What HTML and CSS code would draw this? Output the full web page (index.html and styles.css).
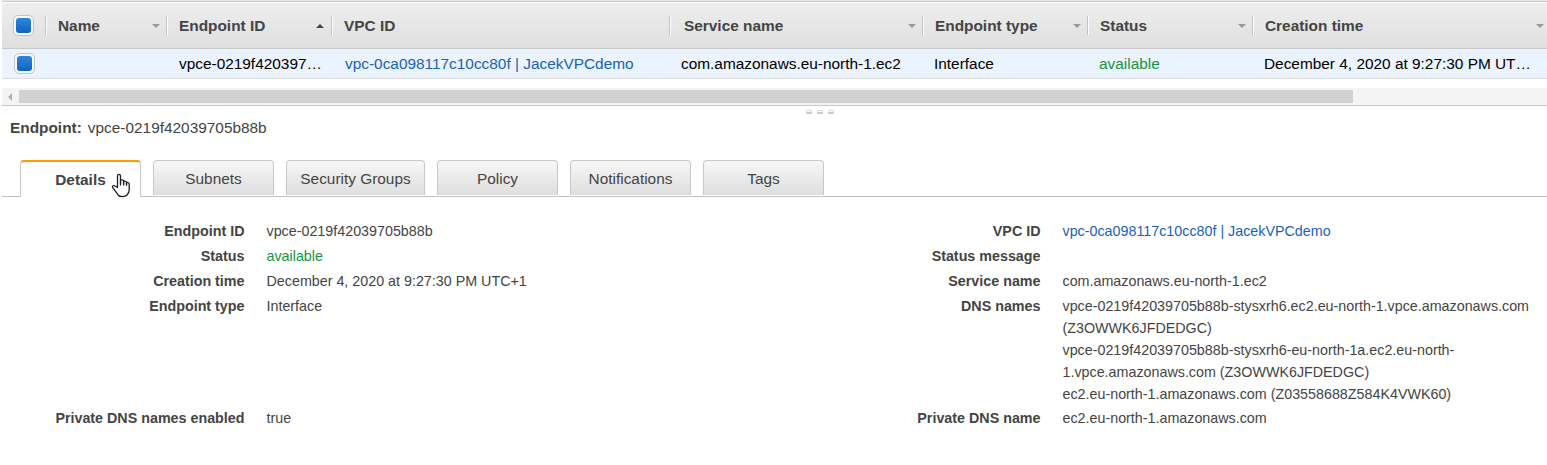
FILE: index.html
```html
<!DOCTYPE html>
<html lang="en">
<head>
<meta charset="utf-8">
<title>Endpoints</title>
<link rel="stylesheet" href="styles.css">
</head>
<body>
<main class="page">
  <section class="grid">
    <div class="row head">
      <div class="check"><span class="box"></span></div>
      <div class="cell">Name<i class="arrow"></i></div>
      <div class="cell">Endpoint ID<i class="arrow up"></i></div>
      <div class="cell">VPC ID</div>
      <div class="cell service">Service name<i class="arrow"></i></div>
      <div class="cell">Endpoint type<i class="arrow"></i></div>
      <div class="cell">Status<i class="arrow"></i></div>
      <div class="cell">Creation time<i class="arrow last"></i></div>
    </div>
    <div class="row data">
      <div class="check"><span class="box"></span></div>
      <div class="cell"></div>
      <div class="cell id">vpce-0219f420397…</div>
      <div class="cell vpc link">vpc-0ca098117c10cc80f | JacekVPCdemo</div>
      <div class="cell">com.amazonaws.eu-north-1.ec2</div>
      <div class="cell">Interface</div>
      <div class="cell state ok">available</div>
      <div class="cell">December 4, 2020 at 9:27:30 PM UT…</div>
    </div>
  </section>
  <div class="scroll"><i class="scroll-arrow"></i><div class="thumb"></div></div>
  <div class="handle"><i></i><i></i><i></i></div>
  <h1 class="title"><b>Endpoint:</b><span>vpce-0219f42039705b88b</span></h1>
  <nav class="tabs">
    <a class="tab active">Details
      <svg class="cursor" width="20" height="25" viewBox="0 0 20 25"><path d="M6.5 14.5V3C6.5 .9 9.5 .9 9.5 3V11V7.8C9.5 6.3 12.6 6.5 12.6 8.2V11V9C12.6 7.6 15.5 7.9 15.5 9.6V12V10.2C15.5 9 18.2 9.3 18.2 11V17C18.2 19.2 17.4 20.6 15.8 22.3C14 24 9 24 7.3 22.2C6 20.8 5 18.5 1.7 14.6C0.8 13 2.6 12 4 13Z" fill="#fff" stroke="#1c1c2e" stroke-width="1.3" stroke-linejoin="round"/><path d="M9.5 8V12.5M12.6 9V12.5M15.5 10V12.5" fill="none" stroke="#1c1c2e" stroke-width="1.2"/></svg>
    </a>
    <a class="tab">Subnets</a>
    <a class="tab wide">Security Groups</a>
    <a class="tab">Policy</a>
    <a class="tab">Notifications</a>
    <a class="tab">Tags</a>
  </nav>
  <section class="details">
    <dl class="list">
      <dt>Endpoint ID</dt><dd>vpce-0219f42039705b88b</dd>
      <dt>Status</dt><dd class="ok">available</dd>
      <dt>Creation time</dt><dd>December 4, 2020 at 9:27:30 PM UTC+1</dd>
      <dt>Endpoint type</dt><dd>Interface</dd>
      <dt>Private DNS names enabled</dt><dd>true</dd>
    </dl>
    <dl class="list">
      <dt>VPC ID</dt><dd class="link">vpc-0ca098117c10cc80f | JacekVPCdemo</dd>
      <dt>Status message</dt><dd></dd>
      <dt>Service name</dt><dd>com.amazonaws.eu-north-1.ec2</dd>
      <dt>DNS names</dt><dd>vpce-0219f42039705b88b-stysxrh6.ec2.eu-north-1.vpce.amazonaws.com<br>(Z3OWWK6JFDEDGC)<br>vpce-0219f42039705b88b-stysxrh6-eu-north-1a.ec2.eu-north-<br>1.vpce.amazonaws.com (Z3OWWK6JFDEDGC)<br>ec2.eu-north-1.amazonaws.com (Z03558688Z584K4VWK60)</dd>
      <dt>Private DNS name</dt><dd>ec2.eu-north-1.amazonaws.com</dd>
    </dl>
  </section>
</main>
</body>
</html>
```
FILE: styles.css
```css
* { box-sizing: border-box; }
body {
  margin: 0;
  background: #fff;
  color: #444;
  font: 15.4px "Liberation Sans", Arial, sans-serif;
}
.page { height: 465px; padding-left: 2px; overflow: hidden; }

.grid { border-top: 1px solid #e6e6e6; }
.row {
  display: grid;
  grid-template-columns: 43px 121px 165px 338px 253px 165px 165px 1fr;
  align-items: center;
}
.head {
  height: 48px;
  border-top: 1px solid #ccc;
  border-bottom: 1px solid #c8c8c8;
  background: linear-gradient(#fff 0 1px, #eee 1px, #dfdfdf);
  font-weight: bold;
}
.data {
  height: 30px;
  border-bottom: 1px solid #dcdcdc;
  background: #eaf3fe;
  color: #000;
}
.check { padding-left: 11px; }
.data .check { padding-left: 12px; }
.box {
  display: grid;
  place-items: center;
  width: 21px;
  height: 21px;
  border: 1px solid #c4c4c4;
  border-radius: 5px;
  background: #f8f8f8;
}
.box::before {
  content: "";
  width: 15px;
  height: 15px;
  border-radius: 3px;
  background: linear-gradient(#2f86de, #1064bd);
}
.cell { white-space: nowrap; }
.head .cell {
  display: flex;
  align-items: center;
  justify-content: space-between;
  height: 19px;
  margin-top: 1px;
  padding: 0 6px 0 12px;
  border-left: 1px solid #c3c3c3;
  box-shadow: inset 1px 0 #fff;
}
.head .service { padding-left: 14px; }
.data .cell { padding-left: 12px; }
.data .id { padding-left: 13px; }
.data .vpc { padding-left: 14px; }
.data .state { padding-left: 12px; }
.arrow {
  border: 4px solid transparent;
  border-top-color: #999;
  border-bottom: 0;
}
.arrow.up {
  margin-right: 1px;
  border-top: 0;
  border-bottom: 4px solid #444;
}
.arrow.last { margin-right: -3px; }
.link, .data .link { color: #1763b7; }
.ok { color: #149641; }

.scroll {
  display: flex;
  align-items: center;
  height: 18px;
  margin-top: 9px;
  border-bottom: 1px solid #c8c8c8;
  background: #f4f4f4;
}
.scroll-arrow {
  margin: 0 7px 0 6px;
  border: 4px solid transparent;
  border-right-color: #b0b0b0;
  border-left: 0;
}
.thumb { width: 1334px; height: 13px; background: #d2d2d2; }
.handle {
  display: flex;
  justify-content: center;
  gap: 5px;
  height: 11px;
  padding: 4px 0 3px;
  margin-left: 91px;
}
.handle i {
  width: 6px;
  border: 1px solid #d4d4d4;
  border-bottom: 2px solid #ccc;
  border-radius: 2px 2px 0 0;
  background: #fff;
}

.title {
  display: flex;
  gap: 6px;
  margin: 0;
  padding-left: 8px;
  font-size: 15.4px;
  font-weight: normal;
  line-height: 22px;
}
.tabs {
  display: flex;
  gap: 12px;
  height: 37px;
  margin-top: 21px;
  padding-left: 18px;
  border-bottom: 1px solid #c3c3c3;
}
.tab {
  position: relative;
  width: 121px;
  height: 35px;
  border: 1px solid #c8c8c8;
  border-bottom: 0;
  border-radius: 4px 4px 0 0;
  background: linear-gradient(#f7f7f7, #dedede);
  line-height: 36px;
  text-align: center;
}
.tab.wide { width: 139px; }
.tab.active {
  height: 37px;
  border-top: 2px solid #f90;
  background: #fff;
  font-weight: bold;
}
.cursor { position: absolute; left: 90px; top: 11px; }

.details {
  display: grid;
  grid-template-columns: 796px 1fr;
  padding: 23px 0 0 0.5px;
  font-size: 14.3px;
  line-height: 22px;
}
.list {
  display: grid;
  grid-template-columns: 242px 1fr;
  grid-template-rows: 25px 25px 25px 112px 25px;
  column-gap: 22px;
  margin: 0;
}
.list dt { font-weight: bold; text-align: right; }
.list dd { margin: 0; white-space: nowrap; }
```
